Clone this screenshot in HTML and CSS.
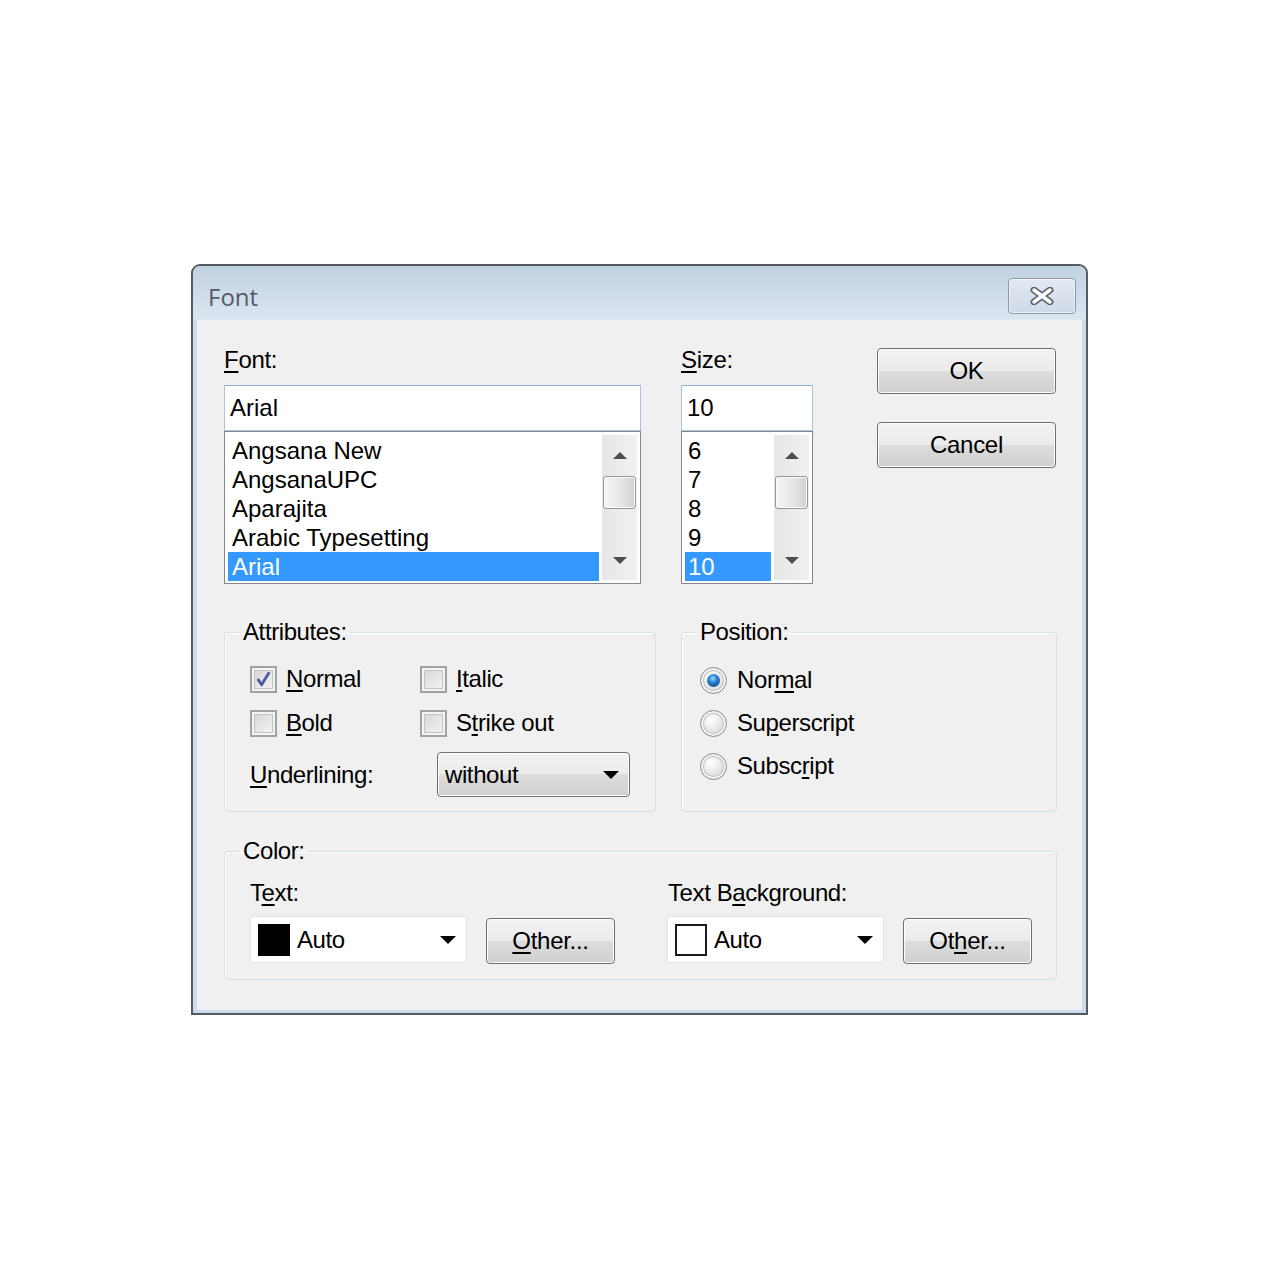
FILE: index.html
```html
<!DOCTYPE html>
<html lang="en">
<head>
    <meta charset="UTF-8">
    <meta name="viewport" content="width=device-width, initial-scale=1.0">
    <title>Font</title>
    <link rel="stylesheet" href="styles.css">
</head>
<body>
    <div class="window">
        <div class="titlebar">
            <span class="title">Font</span>
            <button class="close-btn" aria-label="Close">
                <svg width="26" height="18" viewBox="0 0 26 18">
                    <path d="M5 3 L21 15 M21 3 L5 15" stroke="#5d6573" stroke-width="7" stroke-linecap="round" fill="none"/>
                    <path d="M5 3 L21 15 M21 3 L5 15" stroke="#fff" stroke-width="3.5" stroke-linecap="round" fill="none"/>
                </svg>
            </button>
        </div>

        <div class="client">
            <!-- font / size / buttons -->
            <div class="top-row">
                <div class="col">
                    <div class="label"><u>F</u>ont:</div>
                    <div class="edit">Arial</div>
                    <div class="listbox">
                        <ul class="items">
                            <li>Angsana New</li>
                            <li>AngsanaUPC</li>
                            <li>Aparajita</li>
                            <li>Arabic Typesetting</li>
                            <li class="selected">Arial</li>
                        </ul>
                        <div class="vscroll">
                            <div class="sb-btn"><span class="arrow-up"></span></div>
                            <div class="thumb"></div>
                            <div class="sb-track"></div>
                            <div class="sb-btn"><span class="arrow-down"></span></div>
                        </div>
                    </div>
                </div>

                <div class="col">
                    <div class="label"><u>S</u>ize:</div>
                    <div class="edit">10</div>
                    <div class="listbox">
                        <ul class="items size-items">
                            <li>6</li>
                            <li>7</li>
                            <li>8</li>
                            <li>9</li>
                            <li class="selected">10</li>
                        </ul>
                        <div class="vscroll">
                            <div class="sb-btn"><span class="arrow-up"></span></div>
                            <div class="thumb"></div>
                            <div class="sb-track"></div>
                            <div class="sb-btn"><span class="arrow-down"></span></div>
                        </div>
                    </div>
                </div>

                <div class="buttons">
                    <button class="push-btn">OK</button>
                    <button class="push-btn">Cancel</button>
                </div>
            </div>

            <!-- attributes / position -->
            <div class="groups">
                <fieldset>
                    <legend>Attributes:</legend>
                    <div class="group-body attr-body">
                        <div class="checks">
                            <div class="option"><span class="check checked">
                                <svg width="24" height="24" viewBox="0 0 24 24"><path d="M6 12 L10 18 L18 5" stroke="#4b5c9e" stroke-width="3" fill="none" stroke-linejoin="round"/></svg>
                            </span><span><u>N</u>ormal</span></div>
                            <div class="option"><span class="check"></span><span><u>I</u>talic</span></div>
                            <div class="option"><span class="check"></span><span><u>B</u>old</span></div>
                            <div class="option"><span class="check"></span><span>S<u>t</u>rike out</span></div>
                        </div>
                        <div class="underline-row">
                            <span class="underline-label"><u>U</u>nderlining:</span>
                            <div class="dropdown"><span>without</span><span class="arrow-down black"></span></div>
                        </div>
                    </div>
                </fieldset>

                <fieldset>
                    <legend>Position:</legend>
                    <div class="group-body radios">
                        <div class="option radio-option"><span class="radio on"><span class="dot"></span></span><span>Nor<u>m</u>al</span></div>
                        <div class="option radio-option"><span class="radio"></span><span>Su<u>p</u>erscript</span></div>
                        <div class="option radio-option"><span class="radio"></span><span>Subsc<u>r</u>ipt</span></div>
                    </div>
                </fieldset>
            </div>

            <!-- color -->
            <fieldset class="color-group">
                <legend>Color:</legend>
                <div class="group-body color-body">
                    <div class="color-col">
                        <div class="small-label">T<u>e</u>xt:</div>
                        <div class="color-row">
                            <div class="color-combo">
                                <span class="swatch black-swatch"></span>
                                <span class="combo-text">Auto</span>
                                <span class="arrow-down black"></span>
                            </div>
                            <button class="push-btn other-btn"><u>O</u>ther...</button>
                        </div>
                    </div>
                    <div class="color-col">
                        <div class="small-label">Text B<u>a</u>ckground:</div>
                        <div class="color-row">
                            <div class="color-combo">
                                <span class="swatch white-swatch"></span>
                                <span class="combo-text">Auto</span>
                                <span class="arrow-down black"></span>
                            </div>
                            <button class="push-btn other-btn">Ot<u>h</u>er...</button>
                        </div>
                    </div>
                </div>
            </fieldset>
        </div>
    </div>
</body>
</html>
```

FILE: styles.css
```css
body {
    margin: 0;
    background-color: #fff;
    font-family: "Liberation Sans", Arial, sans-serif;
    font-size: 24px;
    color: #000;
}
u {
    text-decoration-thickness: 2px;
    text-underline-offset: 3px;
}
.window {
    box-sizing: border-box;
    width: 897px;
    height: 751px;
    margin: 264px 0 0 191px;
    border: 2px solid #555b63;
    border-radius: 9px 9px 0 0;
    background-color: #cddbea;
    display: flex;
    flex-direction: column;
}
.titlebar {
    box-sizing: border-box;
    height: 54px;
    display: flex;
    align-items: center;
    justify-content: space-between;
    padding: 6px 10px 0 15px;
    background: linear-gradient(#c2d1e1, #dbe6f1);
    border-radius: 7px 7px 0 0;
}
.title {
    font-family: "Open Sans", sans-serif;
    font-size: 24px;
    color: #545c66;
}
.close-btn {
    width: 68px;
    height: 36px;
    padding: 0;
    border: 1px solid #8d98aa;
    border-radius: 4px;
    background: linear-gradient(#e2e9f1, #cfdae7);
    box-shadow: inset 0 0 0 1px rgba(255, 255, 255, 0.55);
    display: flex;
    align-items: center;
    justify-content: center;
}
.client {
    flex: 1;
    margin: 0 4px 3px;
    padding: 28px 25px 0 27px;
    background-color: #f0f0f0;
}

/* top row */
.top-row {
    display: grid;
    grid-template-columns: 417px 132px 203px;
    column-gap: 40px;
}
.label {
    height: 24px;
    line-height: 24px;
    margin-bottom: 13px;
    letter-spacing: -0.3px;
}
.edit {
    box-sizing: border-box;
    height: 46px;
    line-height: 44px;
    padding-left: 5px;
    border: 1px solid #aac3de;
    border-top-color: #8fb0d3;
    background-color: #fff;
}
.listbox {
    box-sizing: border-box;
    height: 153px;
    display: flex;
    gap: 3px;
    padding: 3px;
    border: 1px solid #828790;
    background-color: #fff;
}
.items {
    flex: 1;
    margin: 0;
    padding: 1px 0 0;
    list-style: none;
}
.items li {
    height: 29px;
    line-height: 29px;
    padding-left: 4px;
    white-space: nowrap;
}
.size-items li {
    padding-left: 3px;
}
.items li.selected {
    background-color: #3399ff;
    color: #fff;
}
.vscroll {
    width: 35px;
    display: flex;
    flex-direction: column;
    background: linear-gradient(to right, #e6e6e6, #f1f1f1);
}
.sb-btn {
    height: 40px;
    display: flex;
    align-items: center;
    justify-content: center;
}
.sb-track {
    flex: 1;
}
.thumb {
    height: 33px;
    margin: 1px 1px 0;
    box-sizing: border-box;
    border: 1px solid #979797;
    border-radius: 3px;
    background: linear-gradient(to right, #f6f6f6, #e4e4e4 60%, #cfcfcf);
    box-shadow: inset 0 0 0 1px #fbfbfb;
}
.arrow-up {
    width: 0;
    height: 0;
    border-left: 7px solid transparent;
    border-right: 7px solid transparent;
    border-bottom: 7px solid #4d4d4d;
}
.arrow-down {
    width: 0;
    height: 0;
    border-left: 7px solid transparent;
    border-right: 7px solid transparent;
    border-top: 7px solid #4d4d4d;
}
.arrow-down.black {
    border-left-width: 8px;
    border-right-width: 8px;
    border-top: 8px solid #000;
}
.buttons {
    display: flex;
    flex-direction: column;
    gap: 28px;
    margin-left: 24px;
}
.push-btn {
    box-sizing: border-box;
    height: 46px;
    padding: 0;
    font-family: "Liberation Sans", Arial, sans-serif;
    font-size: 24px;
    letter-spacing: -0.3px;
    color: #000;
    border: 1px solid #707070;
    border-radius: 4px;
    background: linear-gradient(#f2f2f2 0%, #ebebeb 50%, #dddddd 50%, #cfcfcf 100%);
    box-shadow: inset 0 0 0 1px #fcfcfc;
}

/* group boxes */
fieldset {
    margin: 0;
    min-width: 0;
    padding: 21px 0 14px;
    border: 1px solid #d5dfe5;
    border-radius: 4px;
    box-shadow: inset 1px 1px 0 #fff;
    letter-spacing: -0.4px;
}
legend {
    margin-left: 15px;
    padding: 0 3px;
    line-height: 24px;
}
.groups {
    display: grid;
    grid-template-columns: 432px 376px;
    column-gap: 25px;
    margin-top: 36px;
}
.attr-body {
    margin-left: 25px;
}
.checks {
    display: grid;
    grid-template-columns: 170px auto;
    row-gap: 16px;
}
.option {
    height: 28px;
    display: flex;
    align-items: center;
    gap: 9px;
}
.check {
    box-sizing: border-box;
    width: 27px;
    height: 27px;
    display: flex;
    align-items: center;
    justify-content: center;
    border: 2px solid #a2a2a2;
    background: linear-gradient(135deg, #d3d3d3, #f7f7f7);
    box-shadow: inset 0 0 0 2px #f4f4f4, inset 0 0 0 3px #c4c4c4;
}
.underline-row {
    display: flex;
    align-items: center;
    margin-top: 15px;
}
.underline-label {
    width: 187px;
}
.dropdown {
    box-sizing: border-box;
    width: 193px;
    height: 45px;
    display: flex;
    align-items: center;
    justify-content: space-between;
    padding: 0 10px 0 7px;
    border: 1px solid #707070;
    border-radius: 4px;
    background: linear-gradient(#f2f2f2 0%, #ebebeb 50%, #dddddd 50%, #cfcfcf 100%);
    box-shadow: inset 0 0 0 1px #fcfcfc;
}
.radios {
    margin-left: 18px;
    display: flex;
    flex-direction: column;
    gap: 13px;
}
.radio-option {
    height: 30px;
    gap: 10px;
}
.radio {
    box-sizing: border-box;
    width: 27px;
    height: 27px;
    border-radius: 50%;
    display: flex;
    align-items: center;
    justify-content: center;
    border: 1px solid #8e8f8f;
    background: radial-gradient(circle at 40% 35%, #ffffff, #d6d6d6 80%);
    box-shadow: inset 0 0 0 2px #f3f3f3, inset 0 0 0 3px #c0c0c0;
}
.dot {
    width: 13px;
    height: 13px;
    border-radius: 50%;
    background: radial-gradient(circle at 45% 35%, #a6dcff 0, #2b8ad6 35%, #0d5593 75%);
}

/* color */
.color-group {
    margin-top: 27px;
    padding: 18px 0 15px;
}
.color-body {
    margin-left: 25px;
    display: grid;
    grid-template-columns: 365px 365px;
    column-gap: 52px;
}
.small-label {
    line-height: 24px;
}
.color-col:last-child .small-label {
    padding-left: 1px;
}
.color-row {
    display: flex;
    align-items: flex-start;
    gap: 19px;
    margin-top: 11px;
}
.color-combo {
    box-sizing: border-box;
    width: 217px;
    height: 47px;
    display: flex;
    align-items: center;
    padding: 0 10px 0 7px;
    border: 1px solid #e1e4e9;
    border-radius: 3px;
    background-color: #fff;
}
.combo-text {
    flex: 1;
    margin-left: 7px;
}
.swatch {
    box-sizing: border-box;
    width: 32px;
    height: 32px;
}
.black-swatch {
    background-color: #000;
}
.white-swatch {
    background-color: #fff;
    border: 2px solid #1a1a1a;
}
.other-btn {
    width: 129px;
    margin-top: 2px;
}
```
